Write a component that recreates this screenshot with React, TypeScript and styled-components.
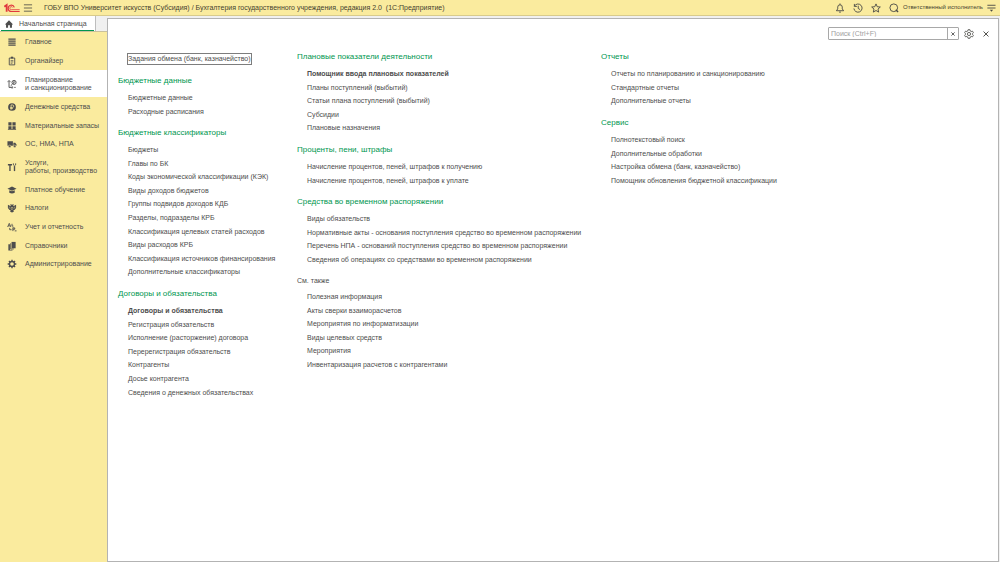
import React from "react";
import styled, { createGlobalStyle } from "styled-components";

const GlobalStyle = createGlobalStyle`
  *, *::before, *::after { box-sizing: border-box; }
  html, body, #root { height: 100%; }
  body {
    margin: 0;
    font-family: "Liberation Sans", Arial, sans-serif;
    font-size: 7px;
    line-height: 9px;
    color: #4d4d4d;
    background: #f0f0f0;
  }
  ul { list-style: none; margin: 0; padding: 0; }
  a { color: inherit; text-decoration: none; }
  svg { display: block; flex: none; }
`;

const Page = styled.div`
  display: flex;
  flex-direction: column;
  min-height: 100%;
`;

const TopBar = styled.header`
  display: flex;
  align-items: center;
  height: 16px;
  padding: 0 4px;
  background: #faeb9e;
  border-bottom: 1px solid #d8cb8c;
  color: #45422f;
`;

const AppTitle = styled.h1`
  flex: 1;
  margin: 0 0 0 9px;
  font-size: 7px;
  font-weight: 400;
  line-height: 9px;
  white-space: pre;
`;

const IconButton = styled.button<{ $width?: number }>`
  display: flex;
  align-items: center;
  justify-content: center;
  width: ${(p) => p.$width ?? 18}px;
  height: 14px;
  padding: 0;
  border: 0;
  background: none;
  color: #4a4a45;
`;

const UserName = styled.a`
  margin: 0 3px 0 0;
  font-size: 6px;
  white-space: nowrap;
`;

const Workspace = styled.div`
  display: flex;
  flex: 1;
`;

const Sidebar = styled.aside`
  display: flex;
  flex-direction: column;
  flex: none;
  width: 107px;
`;

const TabStrip = styled.div`
  display: flex;
  height: 16px;
  border-bottom: 1px solid #c9c19c;
`;

const Tab = styled.a`
  display: flex;
  align-items: center;
  gap: 5px;
  width: 96px;
  padding: 0 4px;
  background: linear-gradient(#00964f, #00964f) 1px 100% / 93px 1px no-repeat #fff;
  border-right: 1px solid #bdbdbd;
  white-space: nowrap;
`;

const Nav = styled.nav`
  flex: 1;
  background: #faeb9e;
`;

const NavItem = styled.li<{ $tall: boolean; $active: boolean }>`
  height: ${(p) => (p.$tall ? 27 : 19)}px;
  background: ${(p) => (p.$active ? "#fff" : "none")};
  &:nth-child(3n + 6) { height: 18px; }
`;

const NavLink = styled.a`
  display: flex;
  align-items: center;
  gap: 8px;
  height: 100%;
  padding-left: 7px;
  white-space: pre;
  line-height: 8px;
`;

const Panel = styled.main`
  flex: 1;
  margin: 2px 1px 0 0;
  background: #fff;
  border: 1px solid #b3b3b3;
`;

const Toolbar = styled.div`
  display: flex;
  justify-content: flex-end;
  padding: 8px 4px 6px 0;
`;

const SearchBox = styled.div`
  display: flex;
  width: 131px;
  height: 13px;
  margin-right: 1px;
  border: 1px solid #a8a8a8;
  border-radius: 1px;
`;

const SearchInput = styled.input`
  flex: 1;
  min-width: 0;
  padding: 0 2px;
  border: 0;
  outline: 0;
  font: inherit;
  background: none;
  &::placeholder { color: #a0a0a0; opacity: 1; }
`;

const ClearButton = styled.button`
  display: flex;
  align-items: center;
  justify-content: center;
  width: 11px;
  padding: 0;
  border: 0;
  border-left: 1px solid #a8a8a8;
  background: none;
  color: #555;
`;

const Columns = styled.div`
  display: grid;
  grid-template-columns: 179px 304px 1fr;
  padding-left: 10px;
`;

const Section = styled.section`
  padding-bottom: 5px;
`;

const SectionTitle = styled.h2<{ $plain?: boolean }>`
  margin: 0;
  height: ${(p) => (p.$plain ? 19 : 20)}px;
  line-height: 20px;
  font-weight: 400;
  font-size: ${(p) => (p.$plain ? 7 : 8)}px;
  color: ${(p) => (p.$plain ? "#4d4d4d" : "#00964f")};
  white-space: nowrap;
`;

const CommandItem = styled.li<{ $bold: boolean }>`
  height: 14px;
  padding-left: 10px;
  line-height: 14px;
  font-weight: ${(p) => (p.$bold ? 700 : 400)};
  white-space: nowrap;
  &:nth-child(5n + 2), &:nth-child(5n + 4) { height: 13px; }
`;

const QuickRow = styled.div`
  display: flex;
  height: 24px;
  padding: 6px 0 6px 9px;
`;

const FocusedLink = styled.a`
  border: 1px solid #7d7d7d;
  line-height: 10px;
  white-space: nowrap;
`;

const Svg = ({ size = 10, children }: { size?: number; children: React.ReactNode }) => (
  <svg
    width={size}
    height={size}
    viewBox="0 0 22 22"
    fill="none"
    stroke="currentColor"
    strokeWidth="2"
    aria-hidden="true"
  >
    {children}
  </svg>
);

const Logo = () => (
  <svg width="16" height="10" viewBox="0 0 48 30" fill="none" stroke="#e0393e" role="img" aria-label="1С">
    <path d="M1 11l7-5v20" strokeWidth="5.500" />
    <path d="M31 13A9.500 9.500 0 1 0 22 25.500h25" strokeWidth="3.600" />
    <path d="M26 13.500a4.500 4.500 0 1 0-4 6.500h25" strokeWidth="2.400" />
  </svg>
);

const gearPath =
  "M9 1.500h4l.8 3 1.900 1.100 3-.8 2 3.400L18.500 10.400v1.200l2.200 2.200-2 3.400-3-.8-1.900 1.100-.8 3H9l-.8-3-1.900-1.100-3 .8-2-3.400 2.200-2.200v-1.200L1.300 8.200l2-3.400 3 .8 1.900-1.100z";

const icons: Record<string, React.ReactNode> = {
  main: <path d="M3 4.500h16M3 9h16M3 13.500h16M3 18h16" strokeWidth="2.600" />,
  organizer: (
    <>
      <path d="M5 4.500h12v15H5z" />
      <path d="M8.500 3.500h5" strokeWidth="4" />
      <path d="M8 10h6M8 13h6M8 16h4" strokeWidth="1.500" />
    </>
  ),
  planning: (
    <>
      <path d="M4.500 4v14.500H12" />
      <path d="M1 7l3.500-4L8 7M10 15.500l3.500 3-3.500 3" strokeWidth="1.600" />
      <circle cx="15.500" cy="7.500" r="4.500" />
      <path d="M14.500 11V5.500h1.500a1.500 1.500 0 0 1 0 3h-2.500" strokeWidth="1.300" />
      <path d="M8 15l4-4M16 18.500h3" />
    </>
  ),
  money: (
    <>
      <circle cx="11" cy="11" r="8.500" fill="currentColor" stroke="none" />
      <path d="M9 17V6.500h3a2.500 2.500 0 0 1 0 5.500H7M7 14.500h6" stroke="#faeb9e" strokeWidth="1.700" />
    </>
  ),
  stock: (
    <path
      d="M3 3h7v7H3zM12 3h7v7h-7zM3 11.500h7v6H3zM12 11.500h7v6h-7zM2 18h18v2H2z"
      fill="currentColor"
      stroke="none"
    />
  ),
  truck: (
    <>
      <path d="M1 5h12v10H1zM14 8h4l3 4v3h-7z" fill="currentColor" stroke="none" />
      <circle cx="6" cy="16" r="2.600" fill="currentColor" stroke="#faeb9e" strokeWidth="1" />
      <circle cx="17" cy="16" r="2.600" fill="currentColor" stroke="#faeb9e" strokeWidth="1" />
    </>
  ),
  tools: (
    <>
      <path d="M2 6h9M6.500 5v15" strokeWidth="3" />
      <path d="M16.500 9v11" strokeWidth="3" />
      <path d="M14 3v3.500l2.500 2 2.500-2V3" />
    </>
  ),
  study: (
    <>
      <path d="M11 3.500l10 4.500-10 4.500L1 8z" fill="currentColor" stroke="none" />
      <path d="M5 11.500l6 2.500 6-2.500V17q-6 3.500-12 0z" fill="currentColor" stroke="none" />
    </>
  ),
  taxes: (
    <>
      <path
        d="M11 5l2-3 2 2-2 3 3-1 4-2v7l-3 4-3 1 1 3-4 2-4-2 1-3-3-1-3-4V4l4 2 3 1-2-3 2-2z"
        fill="currentColor"
        stroke="none"
      />
      <path d="M5 8v4M17 8v4M9 10h4v3l-2 2-2-2z" stroke="#faeb9e" strokeWidth="1" />
    </>
  ),
  report: (
    <>
      <path d="M1.500 11L5 3l3.500 8M3 8.500h4" />
      <path d="M11 4v5h3M6 13v4h4M13 12v8M13 13h4v3h-4M17 19.500h4" />
    </>
  ),
  books: (
    <>
      <path d="M10 2h9v14h-9z" fill="currentColor" stroke="none" />
      <path d="M8 5v12.500h7" strokeWidth="1.800" />
      <path d="M3 7h3.500v12H12v2H3z" fill="currentColor" stroke="none" />
    </>
  ),
  admin: (
    <>
      <circle cx="11" cy="11" r="5.500" strokeWidth="3" />
      <path
        d="M11 1.500V5M11 17v3.500M1.500 11H5M17 11h3.500M4.300 4.300l2.200 2.200M15.500 15.500l2.200 2.200M4.300 17.700l2.200-2.200M15.500 6.500l2.200-2.200"
        strokeWidth="3"
      />
    </>
  ),
};

const navItems = [
  { icon: "main", label: "Главное" },
  { icon: "organizer", label: "Органайзер" },
  { icon: "planning", label: "Планирование\nи санкционирование", active: true },
  { icon: "money", label: "Денежные средства" },
  { icon: "stock", label: "Материальные запасы" },
  { icon: "truck", label: "ОС, НМА, НПА" },
  { icon: "tools", label: "Услуги,\nработы, производство" },
  { icon: "study", label: "Платное обучение" },
  { icon: "taxes", label: "Налоги" },
  { icon: "report", label: "Учет и отчетность" },
  { icon: "books", label: "Справочники" },
  { icon: "admin", label: "Администрирование" },
];

type Group = { title: string; plain?: boolean; bold?: boolean; items: string[] };

const columns: Group[][] = [
  [
    { title: "Бюджетные данные", items: ["Бюджетные данные", "Расходные расписания"] },
    {
      title: "Бюджетные классификаторы",
      items: [
        "Бюджеты",
        "Главы по БК",
        "Коды экономической классификации (КЭК)",
        "Виды доходов бюджетов",
        "Группы подвидов доходов КДБ",
        "Разделы, подразделы КРБ",
        "Классификация целевых статей расходов",
        "Виды расходов КРБ",
        "Классификация источников финансирования",
        "Дополнительные классификаторы",
      ],
    },
    {
      title: "Договоры и обязательства",
      bold: true,
      items: [
        "Договоры и обязательства",
        "Регистрация обязательств",
        "Исполнение (расторжение) договора",
        "Перерегистрация обязательств",
        "Контрагенты",
        "Досье контрагента",
        "Сведения о денежных обязательствах",
      ],
    },
  ],
  [
    {
      title: "Плановые показатели деятельности",
      bold: true,
      items: [
        "Помощник ввода плановых показателей",
        "Планы поступлений (выбытий)",
        "Статьи плана поступлений (выбытий)",
        "Субсидии",
        "Плановые назначения",
      ],
    },
    {
      title: "Проценты, пени, штрафы",
      items: [
        "Начисление процентов, пеней, штрафов к получению",
        "Начисление процентов, пеней, штрафов к уплате",
      ],
    },
    {
      title: "Средства во временном распоряжении",
      items: [
        "Виды обязательств",
        "Нормативные акты - основания поступления средство во временном распоряжении",
        "Перечень НПА - оснований поступления средство во временном распоряжении",
        "Сведения об операциях со средствами во временном распоряжении",
      ],
    },
    {
      title: "См. также",
      plain: true,
      items: [
        "Полезная информация",
        "Акты сверки взаиморасчетов",
        "Мероприятия по информатизации",
        "Виды целевых средств",
        "Мероприятия",
        "Инвентаризация расчетов с контрагентами",
      ],
    },
  ],
  [
    {
      title: "Отчеты",
      items: [
        "Отчеты по планированию и санкционированию",
        "Стандартные отчеты",
        "Дополнительные отчеты",
      ],
    },
    {
      title: "Сервис",
      items: [
        "Полнотекстовый поиск",
        "Дополнительные обработки",
        "Настройка обмена (банк, казначейство)",
        "Помощник обновления бюджетной классификации",
      ],
    },
  ],
];

const CommandGroup = ({ title, plain, bold, items }: Group) => (
  <Section>
    <SectionTitle $plain={plain}>{title}</SectionTitle>
    <ul>
      {items.map((item, i) => (
        <CommandItem key={item} $bold={!!bold && i === 0}>
          <a href="#">{item}</a>
        </CommandItem>
      ))}
    </ul>
  </Section>
);

export default function App() {
  return (
    <>
      <GlobalStyle />
      <Page>
        <TopBar>
          <Logo />
          <IconButton $width={15} aria-label="Меню">
            <Svg>
              <path d="M2 4h18M2 11h18M2 18h18" strokeWidth="1.800" />
            </Svg>
          </IconButton>
          <AppTitle>
            {"ГОБУ ВПО Университет искусств (Субсидия) / Бухгалтерия государственного учреждения, редакция 2.0  (1С:Предприятие)"}
          </AppTitle>
          <IconButton aria-label="Уведомления">
            <Svg>
              <path d="M3 17h16l-3-4V9a5 5 0 0 0-10 0v4zM11 1v3M9 20h4" />
            </Svg>
          </IconButton>
          <IconButton aria-label="История">
            <Svg>
              <path d="M3 7a9 9 0 1 1-1 5M3 2v5.500h5.500M11.500 6v6l4 2.500" />
            </Svg>
          </IconButton>
          <IconButton aria-label="Избранное">
            <Svg>
              <path d="M11 2l2.700 6.200 6.800.6-5.100 4.500 1.500 6.700-5.900-3.500L5.100 20l1.500-6.700L1.500 8.800l6.800-.6z" />
            </Svg>
          </IconButton>
          <IconButton aria-label="Поиск">
            <Svg>
              <circle cx="10.500" cy="10.500" r="8.500" />
              <path d="M15 15l5 5" strokeWidth="3" />
            </Svg>
          </IconButton>
          <UserName href="#">Ответственный исполнитель</UserName>
          <IconButton $width={10} aria-label="Настройки окна">
            <Svg>
              <path d="M3 5h18M3 11h18" />
              <path d="M8.500 15h7L12 19.500z" fill="currentColor" stroke="none" />
            </Svg>
          </IconButton>
        </TopBar>
        <Workspace>
          <Sidebar>
            <TabStrip>
              <Tab href="#">
                <Svg>
                  <path d="M11 3l9 9h-2.500v7.500H13V14H9v5.500H4.500V12H2z" fill="currentColor" stroke="none" />
                </Svg>
                Начальная страница
              </Tab>
            </TabStrip>
            <Nav>
              <ul>
                {navItems.map((item) => (
                  <NavItem key={item.icon} $tall={item.label.includes("\n")} $active={!!item.active}>
                    <NavLink href="#">
                      <Svg>{icons[item.icon]}</Svg>
                      {item.label}
                    </NavLink>
                  </NavItem>
                ))}
              </ul>
            </Nav>
          </Sidebar>
          <Panel>
            <Toolbar>
              <SearchBox>
                <SearchInput type="text" placeholder="Поиск (Ctrl+F)" aria-label="Поиск" />
                <ClearButton aria-label="Очистить">
                  <Svg size={4}>
                    <path d="M2 2l18 18M20 2L2 20" strokeWidth="5" />
                  </Svg>
                </ClearButton>
              </SearchBox>
              <IconButton aria-label="Настройка">
                <Svg>
                  <path d={gearPath} strokeWidth="1.800" />
                  <circle cx="11" cy="11" r="3.500" strokeWidth="1.800" />
                </Svg>
              </IconButton>
              <IconButton $width={16} aria-label="Закрыть">
                <Svg size={6}>
                  <path d="M2 2l18 18M20 2L2 20" strokeWidth="3.500" />
                </Svg>
              </IconButton>
            </Toolbar>
            <Columns>
              {columns.map((groups, i) => (
                <div key={i}>
                  {i === 0 && (
                    <QuickRow>
                      <FocusedLink href="#">Задания обмена (банк, казначейство)</FocusedLink>
                    </QuickRow>
                  )}
                  {groups.map((group) => (
                    <CommandGroup key={group.title} {...group} />
                  ))}
                </div>
              ))}
            </Columns>
          </Panel>
        </Workspace>
      </Page>
    </>
  );
}
